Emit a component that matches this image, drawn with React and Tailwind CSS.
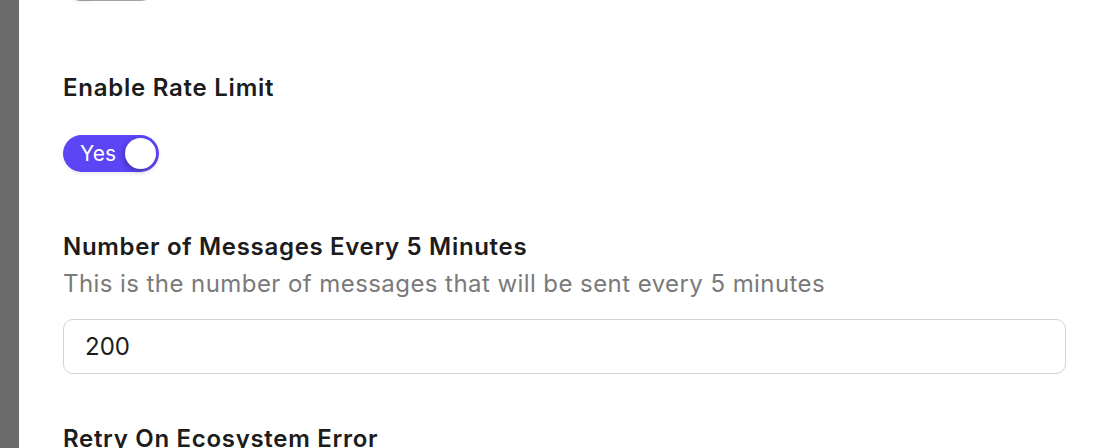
export default function App() {
  return (
    <div className="flex h-[448px] w-[1110px] overflow-hidden bg-white font-['Inter',sans-serif] text-[#1c1c1c]">
      <div className="w-[19px] shrink-0 bg-[#6b6b6b]" />
      <div className="flex-1 pl-[44px] pr-[44px]">
        {/* previous toggle, mostly scrolled away */}
        <div className="-mt-[36px] flex h-[37px] w-[96px] items-center rounded-full bg-[#a3a3a3] px-[3px]">
          <div className="h-[31px] w-[31px] rounded-full bg-white shadow-md" />
        </div>

        <h3 className="mt-[73px] text-[24px] font-semibold leading-[28px] tracking-[0.75px]">Enable Rate Limit</h3>
        <button className="mt-[33px] flex h-[37px] w-[96px] items-center justify-between rounded-full bg-[#5b45f4] pl-[17px] pr-[3px] shadow-[0_2px_4px_rgba(0,0,0,0.08)]">
          <span className="text-[21px] leading-none text-white">Yes</span>
          <span className="h-[31px] w-[31px] rounded-full bg-white shadow-[-2px_2px_4px_rgba(0,0,0,0.25)]" />
        </button>

        <h3 className="mt-[61px] text-[24px] font-semibold leading-[28px] tracking-[0.68px]">
          Number of Messages Every 5 Minutes
        </h3>
        <p className="mt-[7px] text-[24px] leading-[32px] tracking-[0.43px] text-[#7a7a7a]">
          This is the number of messages that will be sent every 5 minutes
        </p>
        <input
          defaultValue="200"
          className="mt-[19px] block h-[55px] w-[1003px] rounded-[10px] border border-[#d2d2d2] px-[21px] text-[24px] text-[#1c1c1c] outline-none"
        />

        <h3 className="mt-[51px] text-[24px] font-semibold leading-[28px] tracking-[0.7px]">Retry On Ecosystem Error</h3>
      </div>
    </div>
  );
}
